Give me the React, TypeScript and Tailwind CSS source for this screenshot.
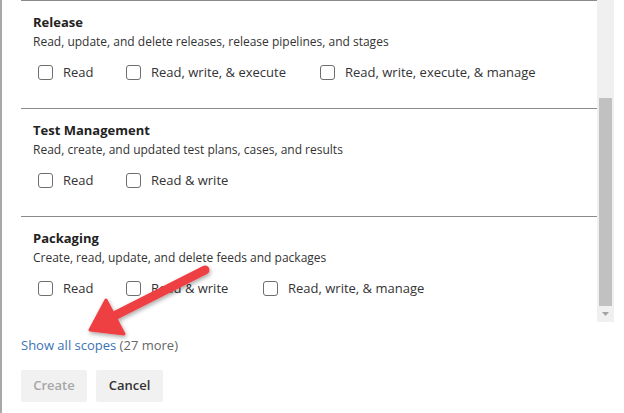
type Scope = {
  title: string
  description: string
  options: { label: string; width: string }[]
}

const scopes: Scope[] = [
  {
    title: "Release",
    description: "Read, update, and delete releases, release pipelines, and stages",
    options: [
      { label: "Read", width: "w-[88px]" },
      { label: "Read, write, & execute", width: "w-[194px]" },
      { label: "Read, write, execute, & manage", width: "w-auto" },
    ],
  },
  {
    title: "Test Management",
    description: "Read, create, and updated test plans, cases, and results",
    options: [
      { label: "Read", width: "w-[88px]" },
      { label: "Read & write", width: "w-auto" },
    ],
  },
  {
    title: "Packaging",
    description: "Create, read, update, and delete feeds and packages",
    options: [
      { label: "Read", width: "w-[88px]" },
      { label: "Read & write", width: "w-[137px]" },
      { label: "Read, write, & manage", width: "w-auto" },
    ],
  },
]

const Checkbox = ({ label, width }: { label: string; width: string }) => (
  <label className={`flex items-center gap-[10px] ${width}`}>
    <span className="w-[15px] h-[15px] rounded-[3px] border border-[#6e6e6e] bg-white shrink-0" />
    <span className="text-[13px] text-[#333]">{label}</span>
  </label>
)

const ScopeSection = ({ scope }: { scope: Scope }) => (
  <div className="h-[108px] border-t border-[#8a8a8a] pl-[12px] pt-[12px]">
    <p className="text-[13px] font-bold text-[#222] leading-[19px]">{scope.title}</p>
    <p className="text-[12px] text-[#333] leading-[19px]">{scope.description}</p>
    <div className="flex items-center pl-[5px] mt-[12px]">
      {scope.options.map((o, i) => (
        <Checkbox key={i} label={o.label} width={o.width} />
      ))}
    </div>
  </div>
)

export default function App() {
  return (
    <div
      className="relative w-[624px] h-[413px] bg-white overflow-hidden border-l-2 border-[#a8a8a8]"
      style={{ fontFamily: '"Open Sans", "Noto Sans", sans-serif' }}
    >
      <div className="flex pl-[19px]">
        <div className="w-[576px] h-[322px] overflow-hidden">
          {scopes.map((s, i) => (
            <ScopeSection key={i} scope={s} />
          ))}
        </div>
        <div className="w-[17px] h-[322px] bg-[#f0f0f0] flex flex-col">
          <div className="h-[98px]" />
          <div className="mx-[2px] h-[208px] bg-[#c1c1c1]" />
          <div className="flex-1 flex items-center justify-center">
            <svg width="7" height="4" viewBox="0 0 7 4">
              <path d="M0 0 L7 0 L3.5 4 Z" fill="#a3a3a3" />
            </svg>
          </div>
        </div>
      </div>

      <div className="pl-[19px] mt-[14px] text-[13px] leading-[18px]">
        <span className="text-[#3a73b5]">Show all scopes</span>
        <span className="text-[#666]"> (27 more)</span>
      </div>

      <div className="flex gap-[9px] pl-[19px] mt-[16px]">
        <button className="w-[66px] h-[32px] bg-[#f1f1f1] text-[#a6a6a6] text-[13px] font-semibold rounded-[2px]">
          Create
        </button>
        <button className="w-[67px] h-[32px] bg-[#f1f1f1] text-[#333] text-[13px] font-semibold rounded-[2px]">
          Cancel
        </button>
      </div>

      {/* annotation arrow */}
      <svg
        className="absolute left-0 top-0 pointer-events-none"
        width="624"
        height="413"
        viewBox="0 0 624 413"
      >
        <defs>
          <filter id="sh" x="-20%" y="-20%" width="140%" height="140%">
            <feDropShadow dx="1" dy="2" stdDeviation="2" floodColor="#000" floodOpacity="0.35" />
          </filter>
        </defs>
        <g filter="url(#sh)">
          <line x1="203" y1="270" x2="112" y2="316" stroke="#ee3f43" strokeWidth="9" strokeLinecap="round" />
          <path d="M88 330 L104 300 L122 334 Z" fill="#ee3f43" strokeLinejoin="round" stroke="#ee3f43" strokeWidth="3" />
        </g>
      </svg>
    </div>
  )
}
